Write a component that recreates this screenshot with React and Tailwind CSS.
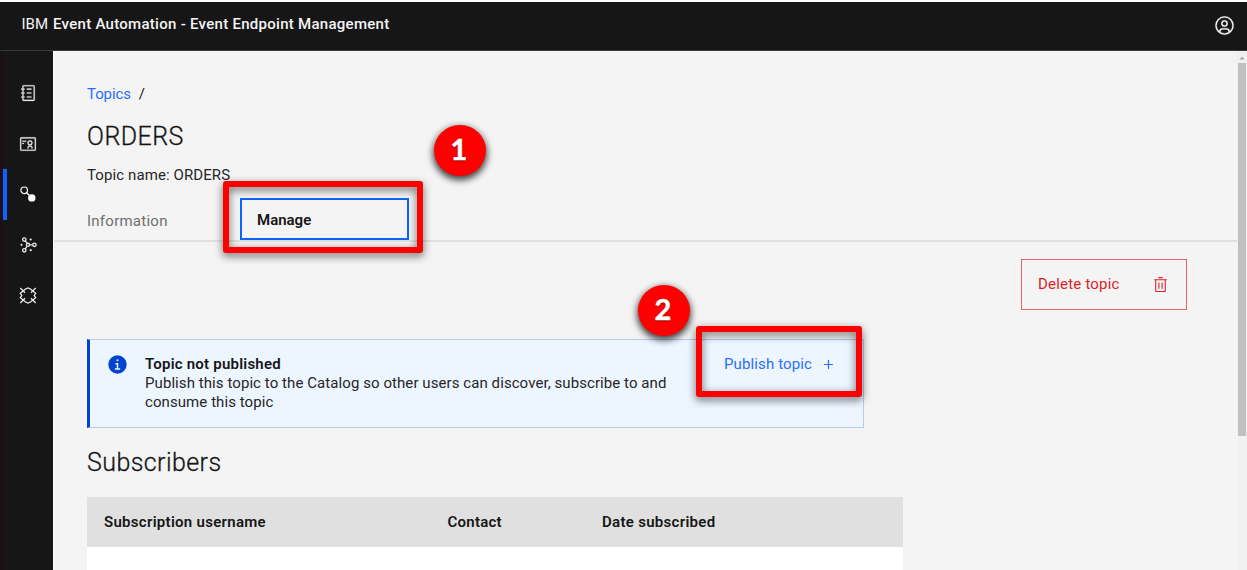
function Catalog() {
  return (
    <svg className="size-[18px]" viewBox="0 0 32 32" fill="currentColor" stroke="currentColor" strokeWidth="0.400">
      <path d="M26 2H8a2 2 0 0 0-2 2v4H4v2h2v5H4v2h2v5H4v2h2v4a2 2 0 0 0 2 2h18a2 2 0 0 0 2-2V4a2 2 0 0 0-2-2Zm0 26H8v-4h2v-2H8v-5h2v-2H8v-5h2V8H8V4h18Z" />
      <path d="M14 8h8v2h-8zM14 15h8v2h-8zM14 22h8v2h-8z" />
    </svg>
  );
}

function Identification() {
  return (
    <svg className="size-[18px]" viewBox="0 0 32 32" fill="currentColor" stroke="currentColor" strokeWidth="0.400">
      <path d="M28 6v20H4V6h24m0-2H4a2 2 0 0 0-2 2v20a2 2 0 0 0 2 2h24a2 2 0 0 0 2-2V6a2 2 0 0 0-2-2Z" />
      <path d="M6 10h7v2H6zM6 14h3v2H6zM24 24h-2v-2a1 1 0 0 0-1-1h-3a1 1 0 0 0-1 1v2h-2v-2a3 3 0 0 1 3-3h3a3 3 0 0 1 3 3ZM19.500 18.500a4.500 4.500 0 1 1 4.500-4.500 4.500 4.500 0 0 1-4.500 4.500Zm0-7a2.500 2.500 0 1 0 2.500 2.500 2.500 2.500 0 0 0-2.500-2.500Z" />
    </svg>
  );
}

function Topic() {
  return (
    <svg className="size-[18px]" viewBox="0 0 18 18" fill="none" stroke="currentColor">
      <circle cx="5.200" cy="5.300" r="3.300" strokeWidth="1.200" />
      <path d="m7.600 7.700 4 3.800" strokeWidth="1.200" />
      <circle cx="12.800" cy="12.900" r="3.700" fill="currentColor" stroke="none" />
    </svg>
  );
}

function Network() {
  return (
    <svg className="size-[18px]" viewBox="0 0 18 18" fill="none" stroke="currentColor" strokeWidth="1.350">
      <circle cx="9" cy="8.800" r="1.600" />
      <circle cx="15.400" cy="8.800" r="1.700" />
      <circle cx="5.300" cy="3.500" r="1.700" />
      <circle cx="5.300" cy="14.300" r="1.700" />
      <path d="M10.600 8.800h3.100M6.300 4.900l1.800 2.500M6.300 12.800l1.800-2.600" />
      <g fill="currentColor" stroke="none">
        <circle cx="2.500" cy="8.800" r="1.100" />
        <circle cx="11.700" cy="3.500" r="1.100" />
        <circle cx="11.700" cy="14.200" r="1.100" />
      </g>
    </svg>
  );
}

function Mesh() {
  return (
    <svg className="size-[18px]" viewBox="0 0 18 18" fill="none" stroke="currentColor" strokeWidth="1.300">
      <path d="M6.200 1.700 9 3.600l2.800-1.900M6.200 15.300 9 13.400l2.800 1.900" className="hidden" />
      <path d="m1.300 6.300 5.200-4.300L9 .9l2.500 1.100 5.200 4.300-1.500 2.200 1.500 2.200-5.200 4.300L9 16.100 6.500 15l-5.200-4.300 1.500-2.200Z" />
      <path d="m1.300 1 4.700 4.700M16.700 1 12 5.700M1.300 16 6 11.300M16.700 16 12 11.300" />
    </svg>
  );
}

function UserAvatar() {
  return (
    <svg className="size-[21px]" viewBox="0 0 32 32" fill="currentColor" stroke="currentColor" strokeWidth="0.400">
      <path d="M16 8a5 5 0 1 0 5 5 5 5 0 0 0-5-5Zm0 8a3 3 0 1 1 3-3 3 3 0 0 1-3 3Z" />
      <path d="M16 2a14 14 0 1 0 14 14A14 14 0 0 0 16 2Zm-6 24.377V25a3 3 0 0 1 3-3h6a3 3 0 0 1 3 3v1.377a11.900 11.900 0 0 1-12 0Zm13.993-1.451A5 5 0 0 0 19 20h-6a5 5 0 0 0-4.993 4.926 12 12 0 1 1 15.985 0Z" />
    </svg>
  );
}

function Trash() {
  return (
    <svg className="size-[17px]" viewBox="0 0 32 32" fill="currentColor">
      <path d="M12 12h2v12h-2zM18 12h2v12h-2zM4 6v2h2v20a2 2 0 0 0 2 2h16a2 2 0 0 0 2-2V8h2V6Zm4 22V8h16v20ZM12 2h8v2h-8z" />
    </svg>
  );
}

function Info() {
  return (
    <svg className="-ml-[0.500px] -mt-px size-[21px] text-[#0043ce]" viewBox="0 0 32 32" fill="currentColor">
      <path d="M16 2a14 14 0 1 0 14 14A14 14 0 0 0 16 2Zm0 6a1.500 1.500 0 1 1-1.500 1.500A1.500 1.500 0 0 1 16 8Zm4 16.125h-8v-2.250h2.875v-5.750H13v-2.250h4.125v8H20Z" />
    </svg>
  );
}

const NAV = [
  { name: "catalog", Icon: Catalog },
  { name: "identity", Icon: Identification },
  { name: "topics", Icon: Topic, active: true },
  { name: "network", Icon: Network },
  { name: "mesh", Icon: Mesh },
];

function Step({ n, className }) {
  return (
    <div
      className={
        "absolute flex h-[51px] w-[52px] items-center justify-center rounded-full bg-[#ff0000] pb-[5px] pr-0.5 font-['Lato',sans-serif] text-[29px] font-bold leading-none text-white shadow-[0_3px_7px_1px_rgba(0,0,0,0.75)] [-webkit-text-stroke:0.500px_white] [text-shadow:0_1px_2px_rgba(0,0,0,0.5)] " +
        className
      }
    >
      {n}
    </div>
  );
}

function Frame({ className }) {
  return (
    <div
      className={
        "pointer-events-none absolute rounded-[3px] border-6 border-[#ff0000] drop-shadow-[0_3px_4px_rgba(0,0,0,0.6)] " +
        className
      }
    />
  );
}

export default function App() {
  return (
    <div className="relative flex h-[570px] w-[1247px] flex-col overflow-hidden bg-white pt-0.5 font-['Roboto',sans-serif] text-[15px] leading-5 text-[#161616]">
      <header className="flex h-[49px] shrink-0 items-center justify-between border-b border-[#393939] bg-[#161616] pb-1 pl-[21.500px] pr-3 text-[#f4f4f4]">
        <div className="flex gap-[5px]">
          <span>IBM</span>
          <span className="font-medium tracking-[0.280px]">Event Automation - Event Endpoint Management</span>
        </div>
        <div className="mt-0.5">
          <UserAvatar />
        </div>
      </header>

      <div className="flex min-h-0 flex-1">
        <nav className="flex w-[53px] shrink-0 flex-col border-l-3 border-[#1b0f19] bg-[#161616] pt-[17px] text-[#e8e8e8]">
          {NAV.map(({ name, Icon, active }) => (
            <div
              key={name}
              className={
                "flex h-[50.600px] items-center border-l-4 pl-3 " +
                (active ? "border-[#0f62fe] text-white" : "border-transparent")
              }
            >
              <Icon />
            </div>
          ))}
        </nav>

        <main className="flex min-w-0 flex-1 flex-col border-l border-white bg-[#f4f4f4]">
          <div className="flex h-[191px] shrink-0 flex-col border-b-2 border-[#e0e0e0] pl-[33px] pt-[33px]">
            <div className="flex gap-2">
              <a className="tracking-[-0.100px] text-[#2a6ffe]">Topics</a>
              <span>/</span>
            </div>
            <h1 className="mt-[17px] text-[25px] font-light leading-8 tracking-[0.450px] [-webkit-text-stroke:0.300px]">
              ORDERS
            </h1>
            <p className="mt-3 tracking-[0.100px] text-[#262626]">Topic name: ORDERS</p>
            <div className="mt-[13px] flex">
              <div className="flex h-[42px] w-[153px] items-center pt-1 tracking-[0.250px] text-[#6f6f6f]">Information</div>
              <div className="flex h-[42px] w-[169px] items-center border-2 border-[#0f62fe] pl-[15px] pt-0.5 font-semibold">
                Manage
              </div>
            </div>
          </div>

          <div className="flex h-[97px] shrink-0 justify-end pr-[60px] pt-[17px]">
            <button className="flex h-[51px] w-[166px] items-center justify-between border border-[#e8636a] pl-4 pr-[17px] text-[#da1e28]">
              <span className="-mt-0.5 tracking-[0.200px]">Delete topic</span>
              <Trash />
            </button>
          </div>

          <div className="ml-[33px] flex h-[89px] w-[776.500px] shrink-0 border border-l-3 border-[#b4cbf6] border-l-[#0043ce] bg-[#edf5ff] pl-[17px] pt-[15px]">
            <Info />
            <div className="ml-[17.500px] w-[550px] leading-[19px]">
              <div className="font-semibold tracking-[0.220px]">Topic not published</div>
              <p className="tracking-[0.075px] text-[#262626]">
                Publish this topic to the Catalog so other users can discover, subscribe to and
                <br />
                consume this topic
              </p>
            </div>
            <button className="-mt-px ml-[29px] flex h-5 items-center gap-3 text-[#2a6ffe]">
              <span className="tracking-[0.130px]">Publish topic</span>
              <svg className="size-[9px]" viewBox="0 0 9 9" stroke="currentColor" strokeWidth="1.200">
                <path d="M4.500 0v9M0 4.500h9" />
              </svg>
            </button>
          </div>

          <h2 className="ml-[33px] mt-[19px] text-[25px] font-light leading-8 tracking-[0.420px] [-webkit-text-stroke:0.300px]">
            Subscribers
          </h2>

          <div className="ml-[33px] mt-[18px] flex w-[816px] flex-1 flex-col bg-white">
            <div className="flex h-[50px] shrink-0 items-center bg-[#e0e0e0] pl-[17px] font-semibold">
              <div className="w-[343.500px] tracking-[0.290px]">Subscription username</div>
              <div className="w-[154.500px] tracking-[0.250px]">Contact</div>
              <div className="tracking-[0.300px]">Date subscribed</div>
            </div>
          </div>
        </main>

        <div className="-ml-2.5 flex w-2.5 shrink-0 flex-col items-center bg-[#f1f1f1] pt-1">
          <svg className="h-2 w-1.5" viewBox="0 0 6 8" fill="#a3a3a3">
            <path d="M0.500 4.500 3 1.500l2.500 3Z" />
          </svg>
          <div className="h-[373px] w-2 bg-[#c1c1c1]" />
        </div>
      </div>

      <Frame className="left-[223px] top-[181px] h-[72px] w-[200px]" />
      <Frame className="left-[696px] top-[326px] h-[71px] w-[166px]" />
      <Step n="1" className="left-[434px] top-[125px]" />
      <Step n="2" className="left-[638px] top-[285px]" />
    </div>
  );
}
